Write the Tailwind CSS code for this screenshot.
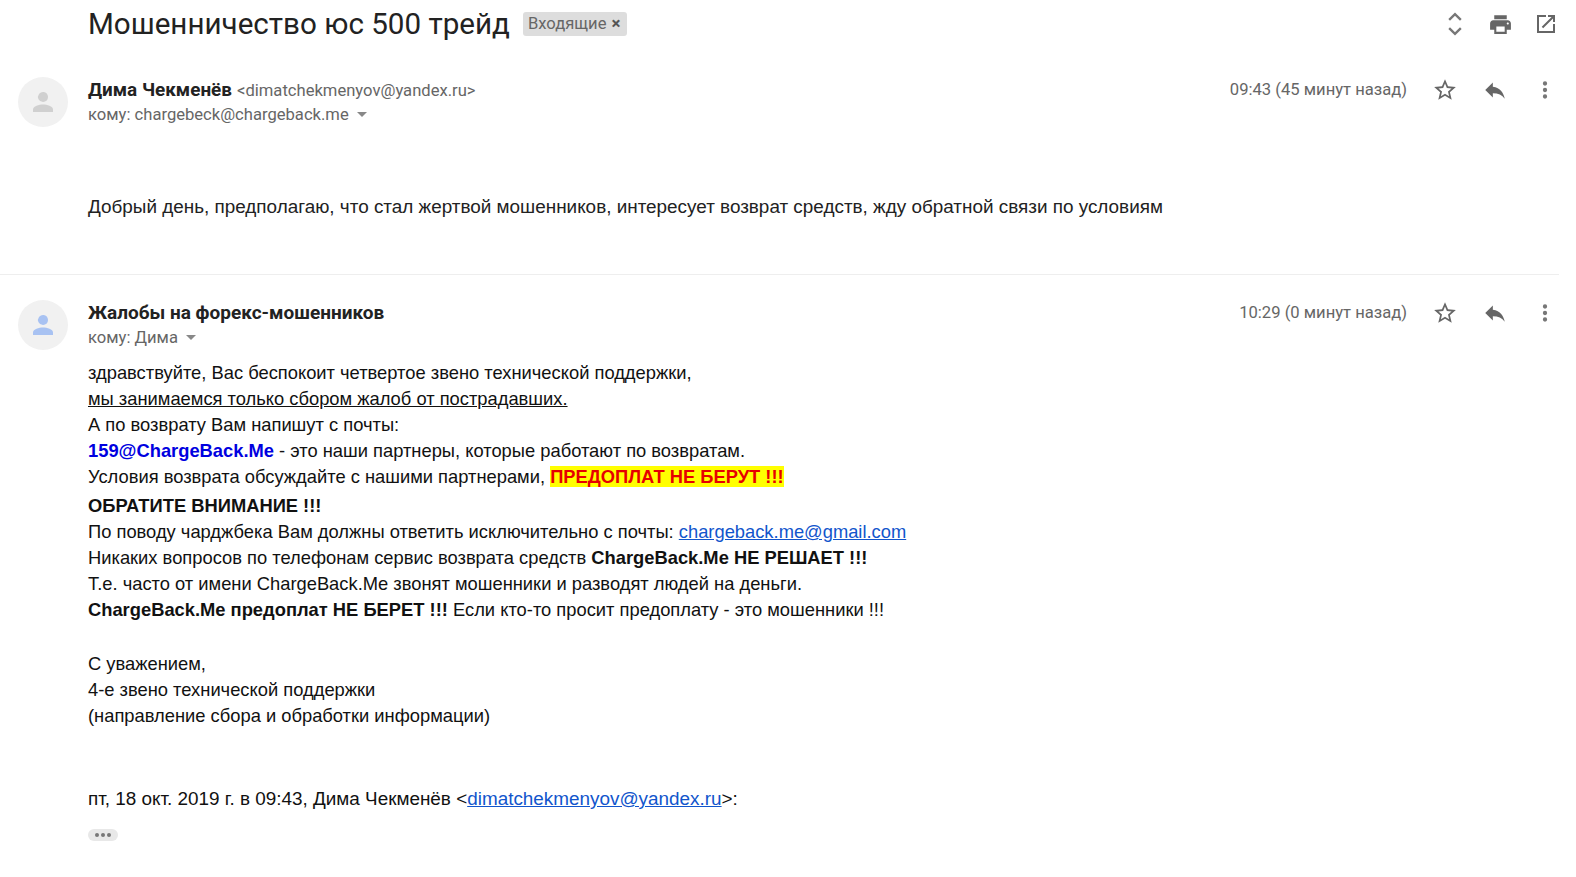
<!DOCTYPE html>
<html lang="ru">
<head>
    <meta charset="UTF-8">
    <title>Мошенничество юс 500 трейд</title>
    <script src="https://cdn.jsdelivr.net/npm/@tailwindcss/browser@4"></script>
</head>
<body class="bg-white h-[877px] overflow-hidden font-['Liberation_Sans',sans-serif] text-[18.33px] text-[#222]">
    <!-- Subject -->
    <div class="flex items-center h-[48px] pl-[88px] pr-[18px]">
        <h1 class="font-['Roboto',sans-serif] text-[29.6px] text-[#222]">Мошенничество юс 500 трейд</h1>
        <span class="ml-[13px] flex items-center h-[24px] pl-[5px] pr-[6px] rounded-[3px] bg-[#ddd] text-[#666] font-['Roboto',sans-serif] text-[16.6px]">Входящие <span class="ml-[5px] text-[#555] text-[17px] font-bold">×</span></span>
        <div class="ml-auto flex items-center gap-[19px]">
            <svg class="w-[28px] h-[28px]" viewBox="0 0 24 24" fill="none" stroke="#777" stroke-width="2"><path d="M7 8.5 12 3.5l5 5M7 15.5l5 5 5-5"/></svg>
            <svg class="w-[25px] h-[25px]" viewBox="0 0 24 24" fill="#666"><path d="M19 8H5c-1.66 0-3 1.34-3 3v6h4v4h12v-4h4v-6c0-1.66-1.34-3-3-3zm-3 11H8v-5h8v5zm3-7c-.55 0-1-.45-1-1s.45-1 1-1 1 .45 1 1-.45 1-1 1zm-1-9H6v4h12V3z"/></svg>
            <svg class="ml-[2px] w-[24px] h-[24px]" viewBox="0 0 24 24" fill="#666"><path d="M19 19H5V5h7V3H3v18h18v-9h-2v7zM14 3v2h3.59l-9.83 9.83 1.41 1.41L19 6.41V10h2V3h-7z"/></svg>
        </div>
    </div>

    <!-- First message -->
    <div class="h-[227px] border-b border-[#eee] mr-[17px]">
        <div class="flex h-[78px] pt-[29px] pl-[18px] pr-[1px]">
            <div class="w-[50px] h-[50px] rounded-full bg-[#f1f1f1] flex items-center justify-center shrink-0">
                <svg class="w-[30px] h-[30px]" viewBox="0 0 24 24" fill="#d0d0d0"><path d="M12 12a4 4 0 1 0-3.2-6.4A4 4 0 0 0 12 12zm0 2c-3.2 0-8 1.3-8 4v2h16v-2c0-2.7-4.8-4-8-4z"/></svg>
            </div>
            <div class="ml-[20px] leading-[25px]">
                <div class="h-[25px] flex items-baseline gap-[5px] whitespace-nowrap"><b class="font-['Roboto',sans-serif] font-bold text-[18.9px]">Дима Чекменёв</b> <span class="font-['Roboto',sans-serif] text-[16.6px] text-[#666]">&lt;dimatchekmenyov@yandex.ru&gt;</span></div>
                <div class="h-[25px] flex items-center font-['Roboto',sans-serif] text-[16.6px] text-[#666]">кому: chargebeck@chargeback.me <span class="ml-[8px] w-0 h-0 border-x-[5px] border-x-transparent border-t-[5px] border-t-[#888]"></span></div>
            </div>
            <div class="ml-auto flex items-start gap-[24px] font-['Roboto',sans-serif] text-[16.6px] text-[#666] leading-[25px]">
                <span class="mr-[1px]">09:43 (45 минут назад)</span>
                <svg class="w-[26px] h-[26px]" viewBox="0 0 24 24" fill="#666"><path d="M22 9.24l-7.19-.62L12 2 9.19 8.63 2 9.24l5.46 4.73L5.82 21 12 17.27 18.18 21l-1.63-7.03L22 9.24zM12 15.4l-3.76 2.27 1-4.28-3.32-2.88 4.38-.38L12 6.1l1.71 4.04 4.38.38-3.32 2.88 1 4.28L12 15.4z"/></svg>
                <svg class="w-[26px] h-[26px]" viewBox="0 0 24 24" fill="#666"><path d="M10 9V5l-7 7 7 7v-4.1c5 0 8.5 1.6 11 5.1-1-5-4-10-11-11z"/></svg>
                <svg class="w-[26px] h-[26px]" viewBox="0 0 24 24" fill="#777"><path d="M12 8a2 2 0 1 0 0-4 2 2 0 0 0 0 4zm0 2a2 2 0 1 0 0 4 2 2 0 0 0 0-4zm0 6a2 2 0 1 0 0 4 2 2 0 0 0 0-4z"/></svg>
            </div>
        </div>
        <p class="mt-[68px] pl-[88px] leading-[26px] whitespace-nowrap text-[18.9px]">Добрый день, предполагаю, что стал жертвой мошенников, интересует возврат средств, жду обратной связи по условиям</p>
    </div>

    <!-- Second message -->
    <div class="flex pt-[25px] pl-[18px] pr-[18px]">
        <div class="w-[50px] h-[50px] rounded-full bg-[#f1f1f1] flex items-center justify-center shrink-0">
            <svg class="w-[30px] h-[30px]" viewBox="0 0 24 24" fill="#a8c2f2"><path d="M12 12a4 4 0 1 0-3.2-6.4A4 4 0 0 0 12 12zm0 2c-3.2 0-8 1.3-8 4v2h16v-2c0-2.7-4.8-4-8-4z"/></svg>
        </div>
        <div class="ml-[20px] leading-[25px]">
            <div class="h-[25px] whitespace-nowrap"><b class="font-['Roboto',sans-serif] font-bold text-[19px]">Жалобы на форекс-мошенников</b></div>
            <div class="h-[25px] flex items-center font-['Roboto',sans-serif] text-[16.6px] text-[#666]">кому: Дима <span class="ml-[8px] w-0 h-0 border-x-[5px] border-x-transparent border-t-[5px] border-t-[#888]"></span></div>
        </div>
        <div class="ml-auto flex items-start gap-[24px] font-['Roboto',sans-serif] text-[16.6px] text-[#666] leading-[25px]">
            <span class="mr-[1px]">10:29 (0 минут назад)</span>
            <svg class="w-[26px] h-[26px]" viewBox="0 0 24 24" fill="#666"><path d="M22 9.24l-7.19-.62L12 2 9.19 8.63 2 9.24l5.46 4.73L5.82 21 12 17.27 18.18 21l-1.63-7.03L22 9.24zM12 15.4l-3.76 2.27 1-4.28-3.32-2.88 4.38-.38L12 6.1l1.71 4.04 4.38.38-3.32 2.88 1 4.28L12 15.4z"/></svg>
            <svg class="w-[26px] h-[26px]" viewBox="0 0 24 24" fill="#666"><path d="M10 9V5l-7 7 7 7v-4.1c5 0 8.5 1.6 11 5.1-1-5-4-10-11-11z"/></svg>
            <svg class="w-[26px] h-[26px]" viewBox="0 0 24 24" fill="#777"><path d="M12 8a2 2 0 1 0 0-4 2 2 0 0 0 0 4zm0 2a2 2 0 1 0 0 4 2 2 0 0 0 0-4zm0 6a2 2 0 1 0 0 4 2 2 0 0 0 0-4z"/></svg>
        </div>
    </div>

    <div class="mt-[10px] pl-[88px] leading-[26px] whitespace-nowrap text-[#111]">
        <div>здравствуйте, Вас беспокоит четвертое звено технической поддержки,</div>
        <div class="underline">мы занимаемся только сбором жалоб от пострадавших.</div>
        <div>А по возврату Вам напишут с почты:</div>
        <div><b class="text-[#0000e0]">159@ChargeBack.Me</b> - это наши партнеры, которые работают по возвратам.</div>
        <div>Условия возврата обсуждайте с нашими партнерами, <b class="bg-[#ffff00] text-[#e60000]">ПРЕДОПЛАТ НЕ БЕРУТ !!!</b></div>
        <div class="mt-[3px]"><b>ОБРАТИТЕ ВНИМАНИЕ !!!</b></div>
        <div>По поводу чарджбека Вам должны ответить исключительно с почты: <a class="text-[#1155cc] underline" href="#">chargeback.me@gmail.com</a></div>
        <div>Никаких вопросов по телефонам сервис возврата средств <b>ChargeBack.Me НЕ РЕШАЕТ !!!</b></div>
        <div>Т.е. часто от имени ChargeBack.Me звонят мошенники и разводят людей на деньги.</div>
        <div><b>ChargeBack.Me предоплат НЕ БЕРЕТ !!!</b> Если кто-то просит предоплату - это мошенники !!!</div>
        <div class="mt-[28px]">С уважением,</div>
        <div>4-е звено технической поддержки</div>
        <div>(направление сбора и обработки информации)</div>
        <div class="mt-[57px] text-[18.9px]">пт, 18 окт. 2019 г. в 09:43, Дима Чекменёв &lt;<a class="text-[#1155cc] underline" href="#">dimatchekmenyov@yandex.ru</a>&gt;:</div>
        <div class="mt-[17px] w-[30px] h-[12px] rounded-[6px] bg-[#e8e8e8] flex items-center justify-center gap-[2px]">
            <span class="w-[4px] h-[4px] rounded-full bg-[#777]"></span>
            <span class="w-[4px] h-[4px] rounded-full bg-[#777]"></span>
            <span class="w-[4px] h-[4px] rounded-full bg-[#777]"></span>
        </div>
    </div>
</body>
</html>
